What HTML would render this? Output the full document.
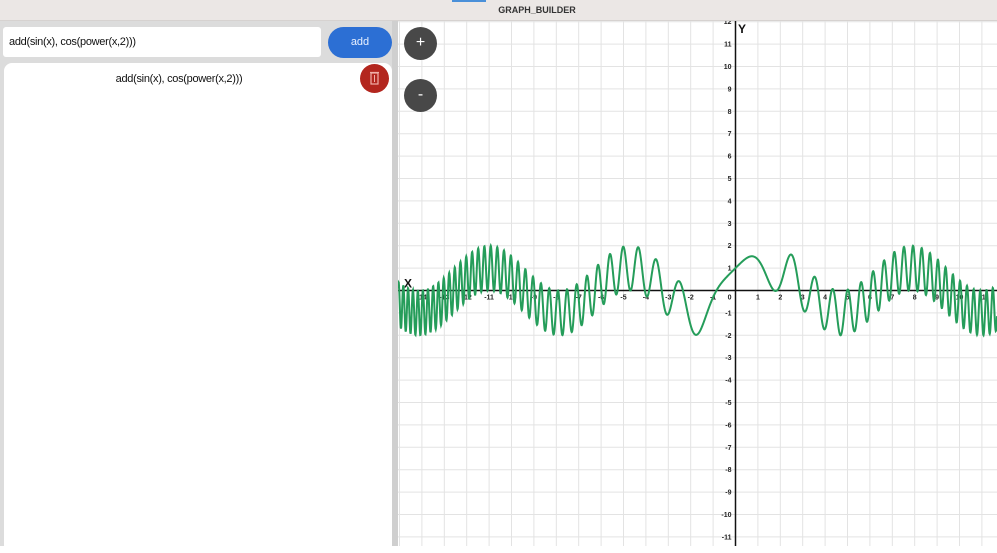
<!DOCTYPE html>
<html><head><meta charset="utf-8">
<style>
*{margin:0;padding:0;box-sizing:border-box}
body{width:997px;height:546px;overflow:hidden;background:#fff;font-family:"Liberation Sans",sans-serif;position:relative}
#top{position:absolute;left:0;top:0;width:997px;height:21px;background:#ebe7e5;border-bottom:1px solid #d6d2d0}
#top .t{position:absolute;left:437px;width:200px;top:5px;text-align:center;font-size:9px;font-weight:bold;color:#333}
#top .tab{position:absolute;left:452px;top:0;width:34px;height:2px;background:#4a90d9}
#left{position:absolute;left:0;top:21px;width:398px;height:525px;background:#dcdcdc}
#inp{position:absolute;left:3px;top:6px;width:318px;height:30px;background:#fff;border-radius:3px;font-size:11px;letter-spacing:-0.3px;color:#111;padding:9px 6px}
#add{position:absolute;left:328px;top:6px;width:64px;height:31px;background:#2c6fd4;border-radius:16px;color:#e8f0ff;font-size:11px;text-align:center;line-height:31px}
#card{position:absolute;left:4px;top:42px;width:388px;height:490px;background:#fff;border-radius:8px}
#card .f{position:absolute;left:0;width:350px;top:10px;text-align:center;font-size:11px;letter-spacing:-0.3px;color:#111}
#del{position:absolute;left:360px;top:64px;width:29px;height:29px;border-radius:50%;background:#b3261e}
#div{position:absolute;left:392px;top:21px;width:6px;height:525px;background:#cfcfcf}
.zb{position:absolute;width:33px;height:33px;border-radius:50%;background:#484848;color:#fff;text-align:center;line-height:32px;font-size:16px}
svg{position:absolute;left:0;top:0}
</style></head><body>
<svg id="g" width="997" height="546"></svg>
<div id="top"><div class="tab"></div><div class="t">GRAPH_BUILDER</div></div>
<div id="left">
<div id="inp">add(sin(x), cos(power(x,2)))</div>
<div id="add">add</div>
<div id="card"><div class="f">add(sin(x), cos(power(x,2)))</div></div>
</div>
<div id="div"></div>
<div id="del"><svg width="29" height="29"><rect x="11" y="9" width="7" height="11" fill="none" stroke="#f0b0a8" stroke-width="1.2"/><line x1="10" y1="8.5" x2="19" y2="8.5" stroke="#f0b0a8" stroke-width="1.2"/><line x1="14.5" y1="11" x2="14.5" y2="18" stroke="#f0b0a8"/></svg></div>
<div class="zb" style="left:404px;top:27px">+</div>
<div class="zb" style="left:404px;top:79px">-</div>
<script>
var ox=735.5,oy=290.5,u=22.4,s='',g=document.getElementById('g');
for(var i=-16;i<=12;i++){var x=ox+i*u;if(x>398)s+='<line x1="'+x+'" y1="21" x2="'+x+'" y2="546" stroke="#e3e3e3"/>';}
for(var j=-12;j<=12;j++){var y=oy+j*u;s+='<line x1="398" y1="'+y+'" x2="997" y2="'+y+'" stroke="#e3e3e3"/>';}
s+='<line x1="398" y1="'+oy+'" x2="997" y2="'+oy+'" stroke="#111" stroke-width="1.5"/>';
s+='<line x1="'+ox+'" y1="21" x2="'+ox+'" y2="546" stroke="#111" stroke-width="1.5"/>';
for(var i=-15;i<=11;i++){if(i==0)continue;var x=ox+i*u;if(x<400)continue;s+='<text x="'+x+'" y="'+(oy+9)+'" font-size="7" font-weight="bold" text-anchor="middle" fill="#222">'+i+'</text>';}
s+='<text x="'+(ox-4)+'" y="'+(oy+9)+'" font-size="7" font-weight="bold" text-anchor="end" fill="#222">0</text>';
for(var j=-11;j<=12;j++){if(j==0)continue;var y=oy-j*u;s+='<text x="'+(ox-4)+'" y="'+(y+2.5)+'" font-size="7" font-weight="bold" text-anchor="end" fill="#222">'+j+'</text>';}
s+='<text x="404" y="'+(oy-3)+'" font-size="12" font-weight="bold" fill="#111">X</text>';
s+='<text x="738" y="33" font-size="12" font-weight="bold" fill="#111">Y</text>';
var d='';for(var px=398;px<=997;px+=0.25){var x=(px-ox)/u;var y=Math.sin(x)+Math.cos(x*x);d+=(d?'L':'M')+px.toFixed(2)+' '+(oy-y*u).toFixed(2);}
s+='<path d="'+d+'" fill="none" stroke="#259d5a" stroke-width="2"/>';
g.innerHTML=s;
</script>
</body></html>
